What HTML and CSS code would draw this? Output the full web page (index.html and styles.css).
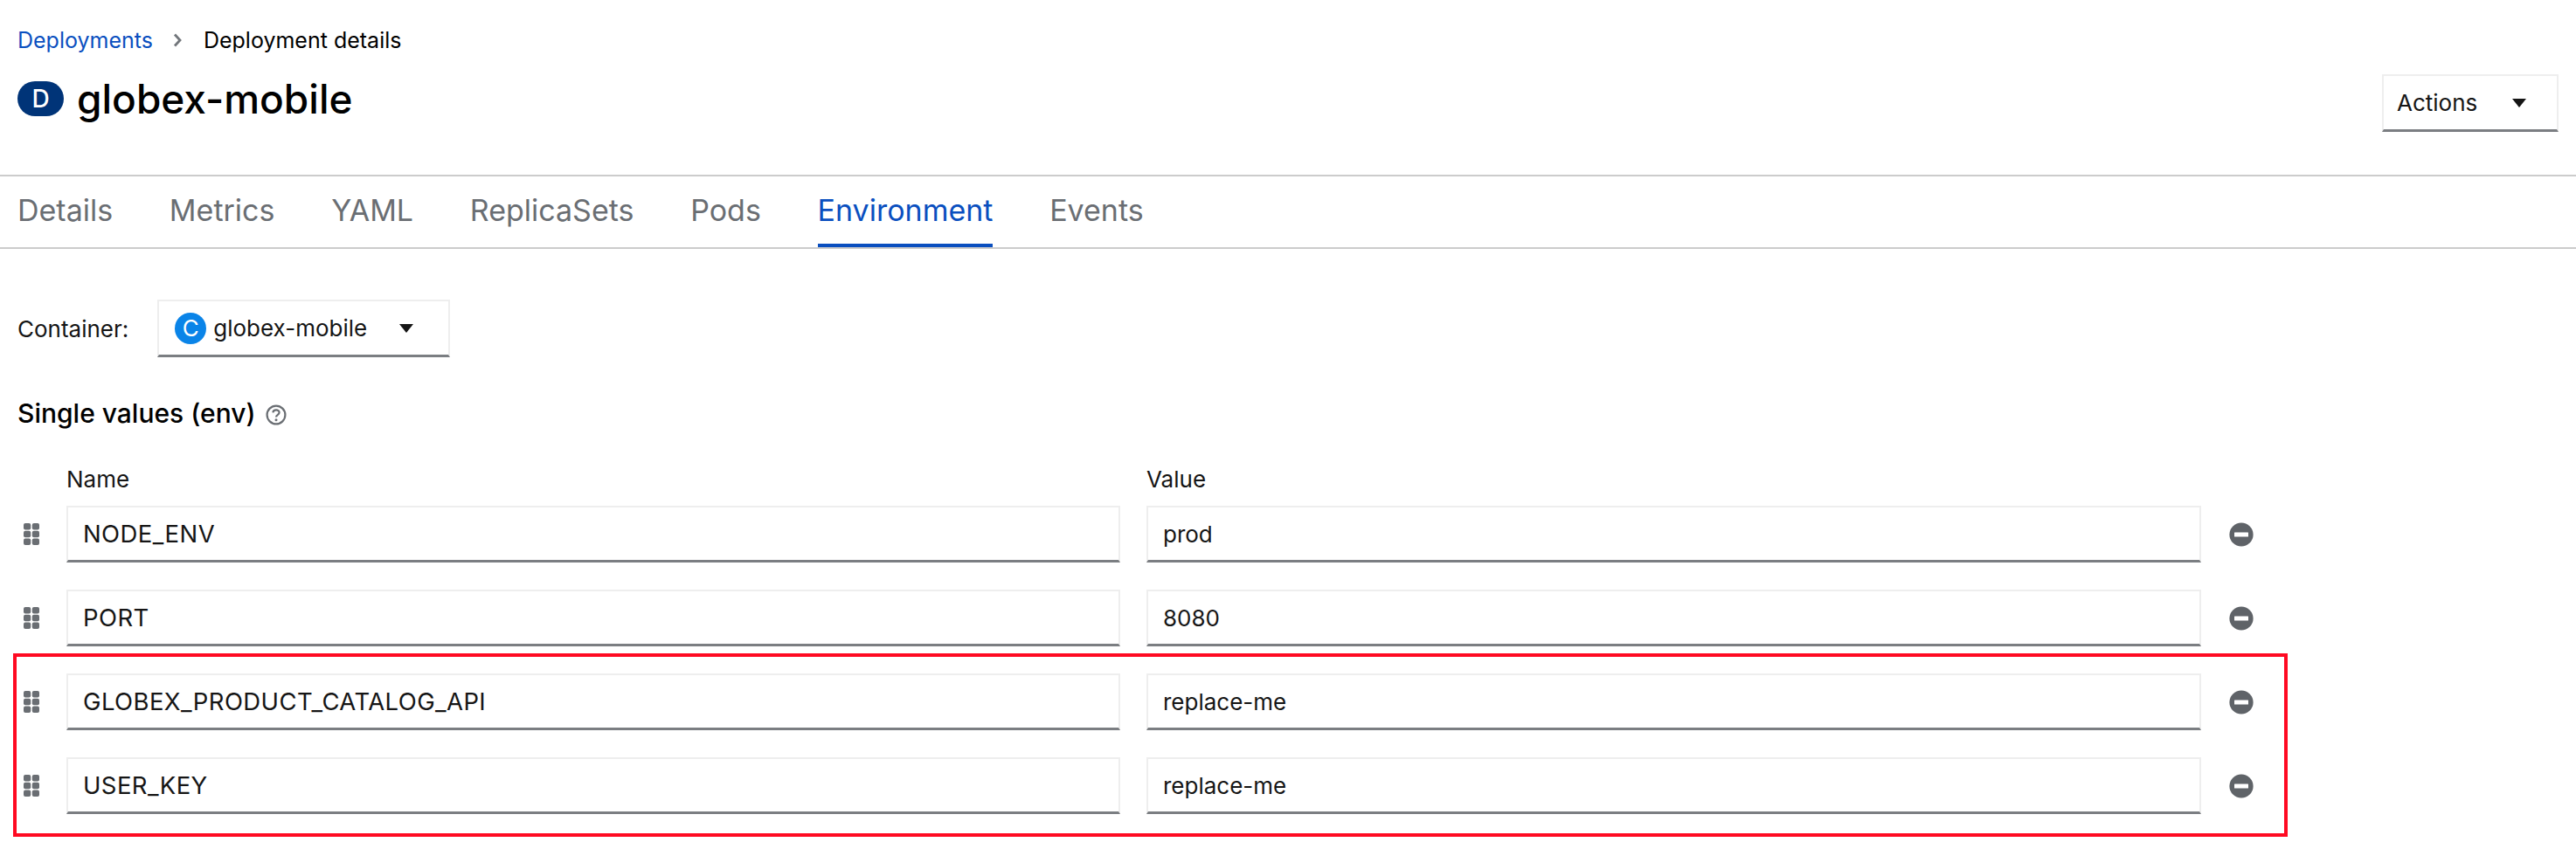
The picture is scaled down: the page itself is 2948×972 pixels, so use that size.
FILE: index.html
```html
<!DOCTYPE html>
<html>
  <head>
    <title>globex-mobile</title>
    <link rel="stylesheet" href="styles.css">
  </head>
  <body>
    <header class="page-head">
      <nav class="breadcrumb">
        <a class="crumb-link">Deployments</a>
        <svg class="crumb-sep" viewBox="0 0 10 16"><path d="M2 1.5 L8 8 L2 14.5" fill="none" stroke="#72767b" stroke-width="2.8"/></svg>
        <span>Deployment details</span>
      </nav>
      <div class="title-row">
        <h1 class="title"><span class="badge badge-d">D</span>globex-mobile</h1>
        <button class="dropdown actions">Actions<span class="caret"></span></button>
      </div>
    </header>

    <ul class="tabs">
      <li>Details</li>
      <li>Metrics</li>
      <li>YAML</li>
      <li>ReplicaSets</li>
      <li>Pods</li>
      <li class="active">Environment</li>
      <li>Events</li>
    </ul>

    <section class="content">
      <div class="container-row">
        <label>Container:</label>
        <button class="dropdown container-select"><span class="badge badge-c">C</span>globex-mobile<span class="caret"></span></button>
      </div>

      <h2 class="section-title">Single values (env)
        <svg class="help" viewBox="0 0 24 24">
          <circle cx="12" cy="12" r="10.4" fill="none" stroke="#6a6e73" stroke-width="2.2"/>
          <path d="M8.4 9.4 C8.6 5.4 15.6 5.4 15.6 9.3 C15.6 12 12 11.6 12 14.6" fill="none" stroke="#6a6e73" stroke-width="2.2"/>
          <circle cx="12" cy="17.8" r="1.5" fill="#6a6e73"/>
        </svg>
      </h2>

      <div class="env-head">
        <span>Name</span>
        <span>Value</span>
      </div>

      <div class="env-row">
        <svg class="drag" viewBox="0 0 18 25"><use href="#grip"/></svg>
        <input type="text" value="NODE_ENV">
        <input type="text" value="prod">
        <svg class="remove" viewBox="0 0 28 28"><use href="#minus"/></svg>
      </div>
      <div class="env-row">
        <svg class="drag" viewBox="0 0 18 25"><use href="#grip"/></svg>
        <input type="text" value="PORT">
        <input type="text" value="8080">
        <svg class="remove" viewBox="0 0 28 28"><use href="#minus"/></svg>
      </div>
      <div class="env-row">
        <svg class="drag" viewBox="0 0 18 25"><use href="#grip"/></svg>
        <input type="text" value="GLOBEX_PRODUCT_CATALOG_API">
        <input type="text" value="replace-me">
        <svg class="remove" viewBox="0 0 28 28"><use href="#minus"/></svg>
      </div>
      <div class="env-row">
        <svg class="drag" viewBox="0 0 18 25"><use href="#grip"/></svg>
        <input type="text" value="USER_KEY">
        <input type="text" value="replace-me">
        <svg class="remove" viewBox="0 0 28 28"><use href="#minus"/></svg>
      </div>
    </section>

    <div class="highlight"></div>

    <svg class="defs" width="0" height="0">
      <defs>
        <g id="grip" fill="#6a6e73">
          <rect x="0" y="0" width="8.2" height="7.6" rx="2"/>
          <rect x="9.8" y="0" width="8.2" height="7.6" rx="2"/>
          <rect x="0" y="8.7" width="8.2" height="7.6" rx="2"/>
          <rect x="9.8" y="8.7" width="8.2" height="7.6" rx="2"/>
          <rect x="0" y="17.4" width="8.2" height="7.6" rx="2"/>
          <rect x="9.8" y="17.4" width="8.2" height="7.6" rx="2"/>
        </g>
        <g id="minus">
          <circle cx="14" cy="14" r="13.6" fill="#5f6368"/>
          <rect x="6" y="11.5" width="16" height="5" rx="0.5" fill="#fff"/>
        </g>
      </defs>
    </svg>
  </body>
</html>
```

FILE: styles.css
```css
body {
  margin: 0;
  background-color: #fff;
  color: #151515;
  font-family: Inter, "Noto Sans", sans-serif;
  font-size: 26px;
}
.page-head {
  height: 200px;
  box-sizing: border-box;
  padding: 28px 20px 0 20px;
}
.breadcrumb {
  display: flex;
  align-items: center;
  height: 36px;
  color: #000;
  font-size: 25px;
}
.crumb-link {
  color: #0a4fbf;
}
.crumb-sep {
  width: 10px;
  height: 16px;
  margin: 0 25px 0 23px;
}
.title-row {
  display: flex;
  justify-content: space-between;
  align-items: flex-start;
}
.title {
  display: flex;
  align-items: center;
  margin: 22px 0 0 0;
  font-size: 46px;
  font-weight: 500;
  line-height: 54px;
  color: #000;
}
.badge {
  display: inline-block;
  flex: none;
  text-align: center;
  color: #fff;
  font-weight: 500;
}
.badge-d {
  width: 53px;
  height: 40px;
  margin-right: 15px;
  border-radius: 20px;
  font-size: 28px;
  line-height: 40px;
  background-color: #003478;
}
.badge-c {
  width: 36px;
  height: 36px;
  margin-right: 8px;
  border-radius: 50%;
  font-size: 26px;
  font-weight: 400;
  line-height: 36px;
  background-color: #0a84e8;
}
.dropdown {
  display: flex;
  align-items: center;
  box-sizing: border-box;
  background-color: #fff;
  border: 2px solid #eee;
  border-bottom: 3px solid #7b7e82;
  color: #151515;
  font-family: inherit;
  font-size: 26px;
}
.caret {
  width: 0;
  height: 0;
  border-left: 8px solid transparent;
  border-right: 8px solid transparent;
  border-top: 10px solid #151515;
}
.actions {
  width: 202px;
  height: 66px;
  margin-top: 21px;
  padding: 0 0 0 15px;
}
.actions .caret {
  margin-left: 40px;
}
.tabs {
  display: flex;
  gap: 64.7px;
  height: 85px;
  box-sizing: border-box;
  margin: 0;
  padding: 0 0 0 20px;
  list-style: none;
  border-top: 2px solid #ccc;
  border-bottom: 2px solid #ccc;
  font-size: 34px;
  color: #6a6e73;
}
.tabs li {
  height: 81px;
  box-sizing: border-box;
  line-height: 78px;
}
.tabs .active {
  color: #0a4fbf;
  border-bottom: 4px solid #0a4fbf;
}
.content {
  padding: 58px 0 0 20px;
}
.container-row {
  display: flex;
  align-items: center;
  gap: 33px;
}
.container-select {
  width: 335px;
  height: 66px;
  padding: 0 0 0 18px;
}
.container-select .caret {
  margin-left: 37px;
}
.section-title {
  display: flex;
  align-items: center;
  gap: 11px;
  margin: 44px 0 0 0;
  font-size: 30px;
  font-weight: 500;
  line-height: 40px;
  color: #000;
}
.help {
  width: 24px;
  height: 24px;
  margin-top: 3px;
}
.env-head {
  display: grid;
  grid-template-columns: 1206px 1207px;
  gap: 30px;
  margin: 38px 0 12px 56px;
  line-height: 36px;
}
.env-row {
  display: flex;
  align-items: center;
  height: 65px;
  margin-bottom: 31px;
}
.drag {
  width: 18px;
  height: 25px;
  margin: 0 31px 0 7px;
}
.env-row input {
  height: 65px;
  box-sizing: border-box;
  padding: 0 17px;
  margin-right: 30px;
  border: 2px solid #eee;
  border-bottom: 3px solid #7b7e82;
  color: #151515;
  font-family: inherit;
  font-size: 26px;
}
.env-row input:nth-of-type(1) {
  width: 1206px;
  font-size: 27.5px;
  letter-spacing: 0.4px;
}
.env-row input:nth-of-type(2) {
  width: 1207px;
  margin-right: 32px;
}
.remove {
  width: 28px;
  height: 28px;
}
.highlight {
  position: absolute;
  left: 15px;
  top: 748px;
  width: 2603px;
  height: 210px;
  box-sizing: border-box;
  border: 4px solid #ff0a22;
}
.defs {
  position: absolute;
}
```
